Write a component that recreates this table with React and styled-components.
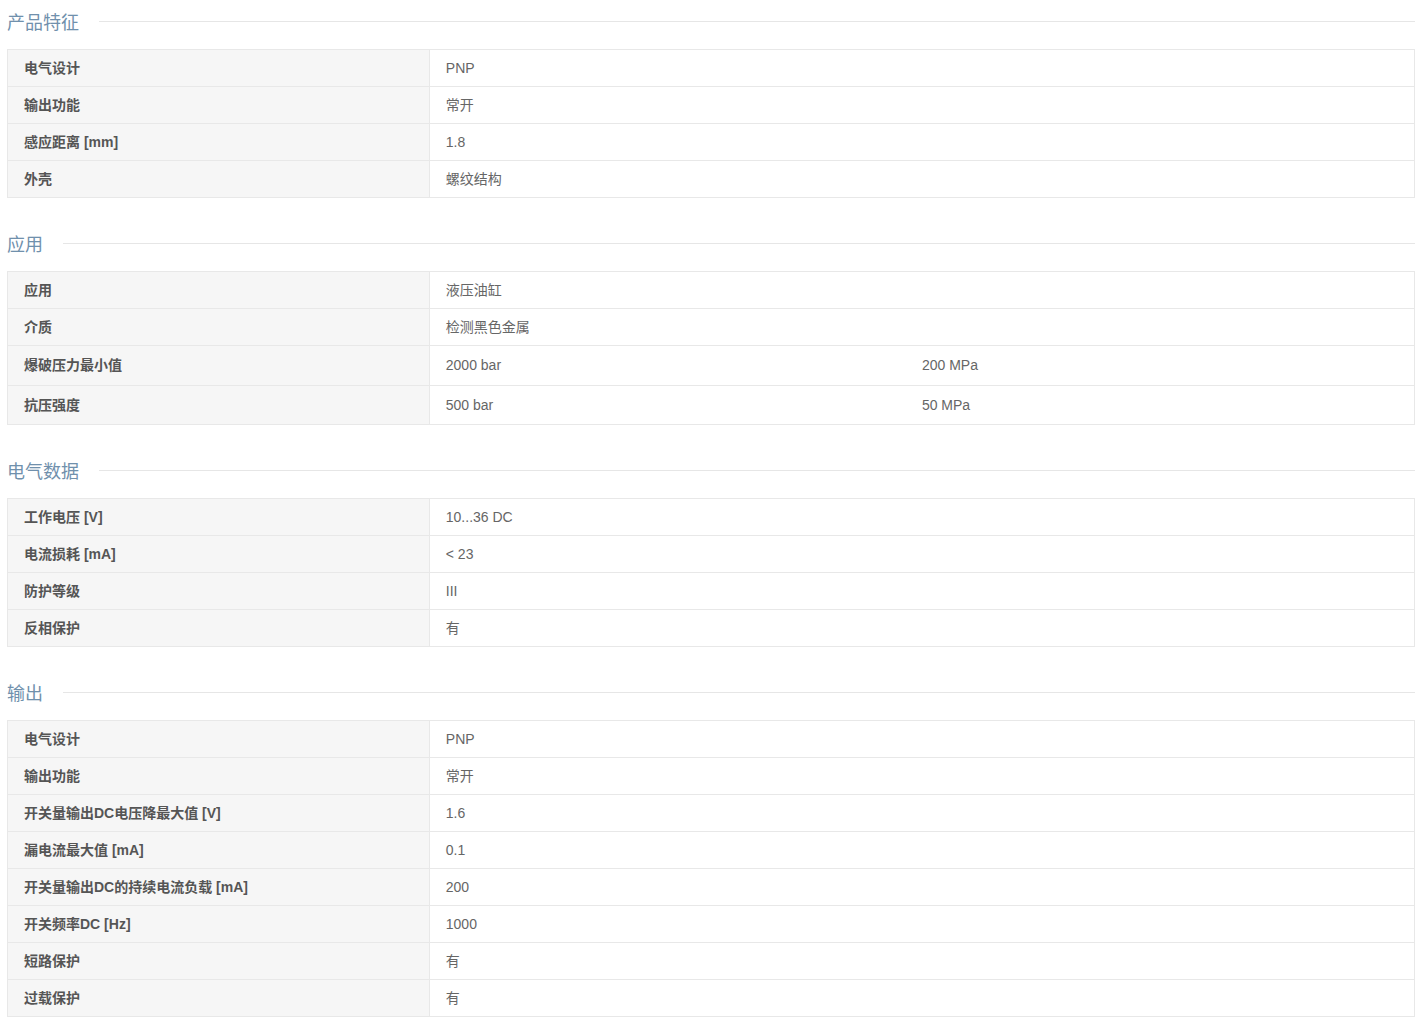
import styled, { createGlobalStyle } from 'styled-components'

const sections = [
  {
    title: '产品特征',
    rows: [
      ['电气设计', 'PNP'],
      ['输出功能', '常开'],
      ['感应距离 [mm]', '1.8'],
      ['外壳', '螺纹结构']
    ]
  },
  {
    title: '应用',
    rows: [
      ['应用', '液压油缸'],
      ['介质', '检测黑色金属'],
      ['爆破压力最小值', '2000 bar', '200 MPa'],
      ['抗压强度', '500 bar', '50 MPa']
    ]
  },
  {
    title: '电气数据',
    rows: [
      ['工作电压 [V]', '10...36 DC'],
      ['电流损耗 [mA]', '< 23'],
      ['防护等级', 'III'],
      ['反相保护', '有']
    ]
  },
  {
    title: '输出',
    rows: [
      ['电气设计', 'PNP'],
      ['输出功能', '常开'],
      ['开关量输出DC电压降最大值 [V]', '1.6'],
      ['漏电流最大值 [mA]', '0.1'],
      ['开关量输出DC的持续电流负载 [mA]', '200'],
      ['开关频率DC [Hz]', '1000'],
      ['短路保护', '有'],
      ['过载保护', '有']
    ]
  }
]

export default function App() {
  return (
    <>
      <GlobalStyle />
      <Page>
        {sections.map((section) => (
          <Section key={section.title}>
            <Heading>
              <HeadingText>{section.title}</HeadingText>
              <HeadingLine />
            </Heading>
            <Table>
              {section.rows.map(([label, value, extra], i) => (
                <Row key={i}>
                  <Label $tall={!!extra}>{label}</Label>
                  <Value $tall={!!extra}>
                    {extra ? (
                      <Split>
                        <span>{value}</span>
                        <span>{extra}</span>
                      </Split>
                    ) : value}
                  </Value>
                </Row>
              ))}
            </Table>
          </Section>
        ))}
      </Page>
    </>
  )
}

const GlobalStyle = createGlobalStyle`
  body {
    margin: 0;
    background: #fff;
    font-family: "Liberation Sans", Arial, "Noto Sans CJK SC", sans-serif;
  }
`
const Page = styled.div`
  padding: 0 5px 0 7px;
`
const Section = styled.section`
  margin-bottom: 24px;
`
const Heading = styled.div`
  display: flex;
  align-items: center;
  gap: 20px;
  height: 42px;
  margin-bottom: 7px;
`
const HeadingText = styled.h3`
  margin: 0;
  font-size: 18px;
  font-weight: normal;
  color: #7090ac;
  font-family: "Noto Sans CJK SC", sans-serif;
  line-height: 24px;
`
const HeadingLine = styled.div`
  flex: 1;
  height: 1px;
  background: #e6e6e6;
`
const Table = styled.div`
  border: 1px solid #e8e8e8;
  border-bottom: none;
`
const Row = styled.div`
  display: grid;
  grid-template-columns: 30% 1fr;
  border-bottom: 1px solid #e8e8e8;
`
const Label = styled.div`
  background: #f6f6f6;
  border-right: 1px solid #e8e8e8;
  padding: ${(p) => (p.$tall ? '9.25px' : '8px')} 16px;
  line-height: 20px;
  font-size: 14px;
  font-weight: bold;
  color: #555;
`
const Value = styled.div`
  padding: ${(p) => (p.$tall ? '9.25px' : '8px')} 16px;
  line-height: 20px;
  font-size: 14px;
  color: #666;
`
const Split = styled.div`
  display: grid;
  grid-template-columns: 1fr 1fr;
`
